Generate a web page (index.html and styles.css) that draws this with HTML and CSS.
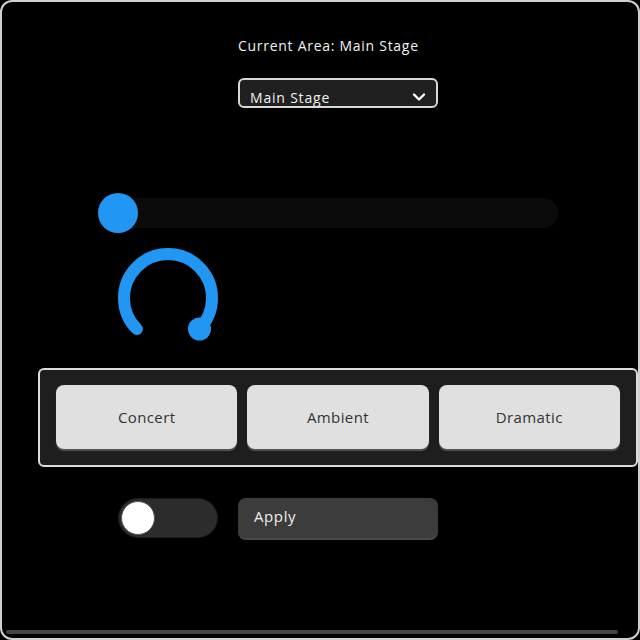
FILE: index.html
```html
<!DOCTYPE html>
<html>
<head>
<meta charset="utf-8">
<link rel="stylesheet" href="styles.css">
</head>
<body>
<div class="frame">
  <div class="title">Current Area: Main Stage</div>
  <div class="select">
    <span class="select-text">Main Stage</span>
    <svg class="chev" width="14" height="10" viewBox="0 0 14 10"><path d="M2 2.5 L7 7.5 L12 2.5" fill="none" stroke="#fff" stroke-width="2.4" stroke-linecap="round" stroke-linejoin="round"/></svg>
  </div>
  <div class="slider">
    <div class="track"></div>
    <div class="thumb"></div>
  </div>
  <svg class="knob" width="100" height="100" viewBox="0 0 100 100">
    <path d="M18.89 81.11 A44 44 0 1 1 81.11 81.11" fill="none" stroke="#2196f3" stroke-width="12" stroke-linecap="round"/>
    <circle cx="81.5" cy="81" r="11.5" fill="#2196f3"/>
  </svg>
  <div class="presets">
    <button class="preset">Concert</button>
    <button class="preset">Ambient</button>
    <button class="preset">Dramatic</button>
  </div>
  <div class="controls">
    <div class="toggle"><div class="toggle-knob"></div></div>
    <div class="apply">Apply</div>
  </div>
  <div class="scrollbar"></div>
</div>
</body>
</html>
```
FILE: styles.css
```css
html, body {
  margin: 0;
  padding: 0;
  background: #000;
}
body {
  font-family: "Open Sans", "DejaVu Sans", sans-serif;
  color: #fff;
}
.frame {
  width: 640px;
  height: 640px;
  box-sizing: border-box;
  border: 2px solid #d0d0d0;
  border-radius: 12px;
  background: #000;
  padding-top: 34px;
  display: flex;
  flex-direction: column;
  overflow: hidden;
}
.title {
  margin-left: 236px;
  font-size: 14px;
  line-height: 20px;
  letter-spacing: 0.72px;
  color: #f2f2f2;
}
.select {
  margin-top: 22px;
  margin-left: 236px;
  width: 200px;
  height: 30px;
  box-sizing: border-box;
  border: 2px solid #d8d8d8;
  border-radius: 6px;
  background: #202020;
  display: flex;
  align-items: flex-start;
  padding: 8px 10px 0 10px;
  overflow: hidden;
}
.select-text {
  font-size: 14px;
  line-height: 20px;
  letter-spacing: 0.8px;
  color: #f0f0f0;
}
.chev {
  margin-left: auto;
  margin-top: 4px;
  margin-right: 0;
}
.slider {
  position: relative;
  margin-top: 85px;
  margin-left: 96px;
  width: 460px;
  height: 40px;
  flex: none;
}
.track {
  margin-top: 5px;
  height: 30px;
  border-radius: 15px;
  background: #0b0b0b;
}
.thumb {
  position: absolute;
  left: 0;
  top: 0;
  width: 40px;
  height: 40px;
  border-radius: 50%;
  background: #2196f3;
}
.knob {
  display: block;
  margin-top: 15px;
  margin-left: 116px;
  flex: none;
}
.presets {
  margin-top: 20px;
  margin-left: 36px;
  width: 600px;
  height: 99px;
  box-sizing: border-box;
  border: 2px solid #dcdcdc;
  border-radius: 6px;
  background: #1e1e1e;
  padding: 15px 16px 15px 16px;
  display: grid;
  grid-template-columns: 1fr 1fr 1fr;
  gap: 10px;
  flex: none;
}
.preset {
  height: 64px;
  border: none;
  border-radius: 8px;
  background: #e0e0e0;
  box-shadow: 0 2px 1px rgba(90, 90, 90, 0.9);
  font-family: "Open Sans", "DejaVu Sans", sans-serif;
  font-size: 15px;
  letter-spacing: 0.4px;
  color: #333;
  padding: 0;
}
.controls {
  margin-top: 31px;
  margin-left: 116px;
  display: flex;
  gap: 20px;
  align-items: flex-start;
  flex: none;
}
.toggle {
  width: 100px;
  height: 40px;
  box-sizing: border-box;
  border-radius: 20px;
  background: #2c2c2c;
  border: 1px solid #1c1c1c;
  padding: 2px;
}
.toggle-knob {
  width: 34px;
  height: 34px;
  border-radius: 50%;
  background: #fff;
  box-sizing: border-box;
  border: 1px solid #555;
}
.apply {
  width: 200px;
  height: 42px;
  box-sizing: border-box;
  border-radius: 8px;
  background: #3c3c3c;
  border-bottom: 2px solid #4a4a4a;
  padding: 8px 16px 0 16px;
  font-size: 15px;
  line-height: 20px;
  letter-spacing: 0.6px;
  color: #eee;
}
.scrollbar {
  margin-top: auto;
  margin-bottom: 4px;
  margin-left: 4px;
  width: 612px;
  height: 4px;
  border-radius: 2px;
  background: #444;
  flex: none;
}
```
